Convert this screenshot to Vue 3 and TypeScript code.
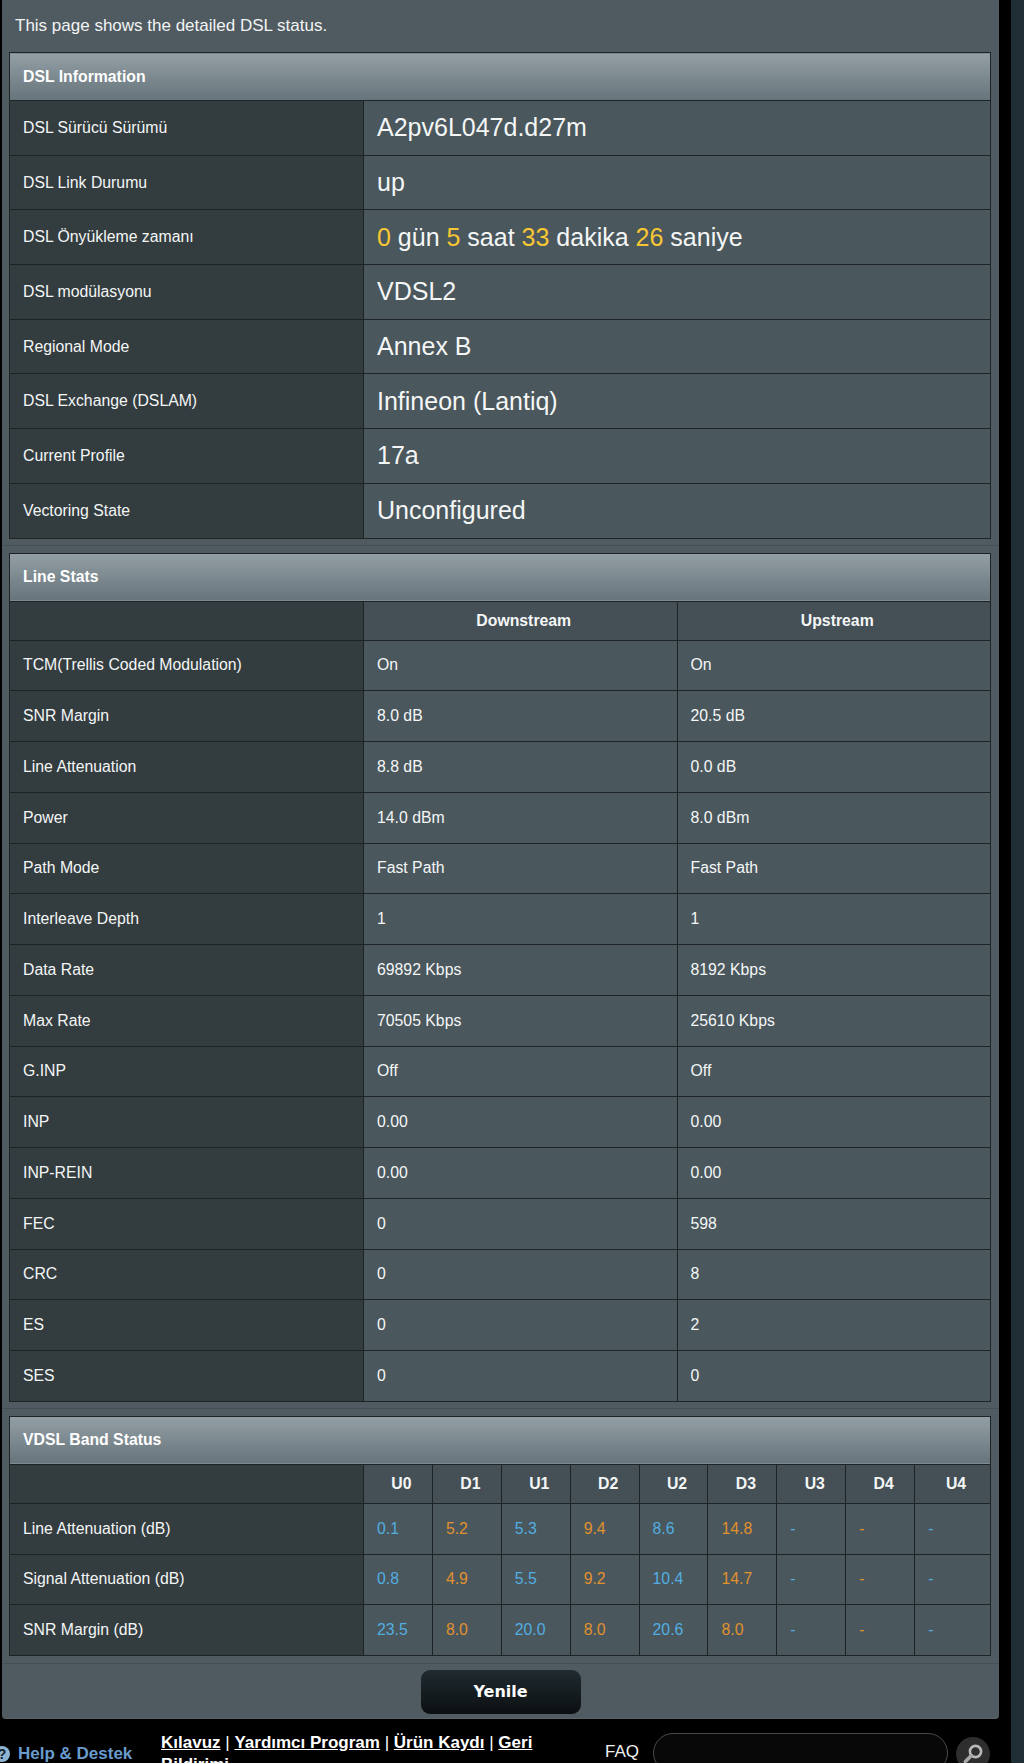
<script setup lang="ts">
interface Span { t: string; hi?: boolean }
const info: { label: string; value: Span[] }[] = [
  { label: 'DSL Sürücü Sürümü', value: [{ t: 'A2pv6L047d.d27m' }] },
  { label: 'DSL Link Durumu', value: [{ t: 'up' }] },
  { label: 'DSL Önyükleme zamanı', value: [
    { t: '0', hi: true }, { t: ' gün ' }, { t: '5', hi: true }, { t: ' saat ' },
    { t: '33', hi: true }, { t: ' dakika ' }, { t: '26', hi: true }, { t: ' saniye' },
  ] },
  { label: 'DSL modülasyonu', value: [{ t: 'VDSL2' }] },
  { label: 'Regional Mode', value: [{ t: 'Annex B' }] },
  { label: 'DSL Exchange (DSLAM)', value: [{ t: 'Infineon (Lantiq)' }] },
  { label: 'Current Profile', value: [{ t: '17a' }] },
  { label: 'Vectoring State', value: [{ t: 'Unconfigured' }] },
]
const stats: [string, string, string][] = [
  ['TCM(Trellis Coded Modulation)', 'On', 'On'],
  ['SNR Margin', '8.0 dB', '20.5 dB'],
  ['Line Attenuation', '8.8 dB', '0.0 dB'],
  ['Power', '14.0 dBm', '8.0 dBm'],
  ['Path Mode', 'Fast Path', 'Fast Path'],
  ['Interleave Depth', '1', '1'],
  ['Data Rate', '69892 Kbps', '8192 Kbps'],
  ['Max Rate', '70505 Kbps', '25610 Kbps'],
  ['G.INP', 'Off', 'Off'],
  ['INP', '0.00', '0.00'],
  ['INP-REIN', '0.00', '0.00'],
  ['FEC', '0', '598'],
  ['CRC', '0', '8'],
  ['ES', '0', '2'],
  ['SES', '0', '0'],
]
const bands = ['U0', 'D1', 'U1', 'D2', 'U2', 'D3', 'U3', 'D4', 'U4']
const bandRows: { label: string; values: string[] }[] = [
  { label: 'Line Attenuation (dB)', values: ['0.1', '5.2', '5.3', '9.4', '8.6', '14.8', '-', '-', '-'] },
  { label: 'Signal Attenuation (dB)', values: ['0.8', '4.9', '5.5', '9.2', '10.4', '14.7', '-', '-', '-'] },
  { label: 'SNR Margin (dB)', values: ['23.5', '8.0', '20.0', '8.0', '20.6', '8.0', '-', '-', '-'] },
]
const links = ['Kılavuz', 'Yardımcı Program', 'Ürün Kaydı']
</script>

<template>
  <div class="page">
    <div class="main">
      <div class="panel">
        <p class="intro">This page shows the detailed DSL status.</p>

        <section class="section">
          <table class="info">
            <colgroup><col class="c-label" /><col /></colgroup>
            <thead><tr><td colspan="2" class="title">DSL Information</td></tr></thead>
            <tbody>
              <tr v-for="r in info" :key="r.label">
                <th>{{ r.label }}</th>
                <td class="big"><span v-for="(s, i) in r.value" :key="i" :class="{ hi: s.hi }">{{ s.t }}</span></td>
              </tr>
            </tbody>
          </table>
        </section>

        <section class="section">
          <table class="stats">
            <colgroup><col class="c-label" /><col /><col /></colgroup>
            <thead>
              <tr><td colspan="3" class="title">Line Stats</td></tr>
              <tr class="head"><th></th><td>Downstream</td><td>Upstream</td></tr>
            </thead>
            <tbody>
              <tr v-for="r in stats" :key="r[0]">
                <th>{{ r[0] }}</th><td>{{ r[1] }}</td><td>{{ r[2] }}</td>
              </tr>
            </tbody>
          </table>
        </section>

        <section class="section">
          <table class="bands">
            <colgroup>
              <col class="c-label" />
              <col v-for="(b, i) in bands" :key="b" :class="i === 8 ? 'c-last' : 'c-band'" />
            </colgroup>
            <thead>
              <tr><td colspan="10" class="title">VDSL Band Status</td></tr>
              <tr class="head"><th></th><td v-for="b in bands" :key="b">{{ b }}</td></tr>
            </thead>
            <tbody>
              <tr v-for="r in bandRows" :key="r.label">
                <th>{{ r.label }}</th>
                <td v-for="(v, i) in r.values" :key="i" :class="i % 2 === 0 ? 'up' : 'down'">{{ v }}</td>
              </tr>
            </tbody>
          </table>
        </section>

        <div class="actions"><button class="refresh" type="button">Yenile</button></div>
      </div>

      <footer class="footer">
        <div class="help">
          <span class="help-icon">?</span>
          <span class="help-text">Help &amp; Destek</span>
        </div>
        <div class="links">
          <template v-for="l in links" :key="l"><a>{{ l }}</a>{{ ' | ' }}</template><a>Geri</a>{{ ' ' }}<a>Bildirimi</a>
        </div>
        <span class="faq">FAQ</span>
        <div class="search-field"></div>
        <div class="search-btn">
          <svg width="24" height="24" viewBox="0 0 24 24" fill="none">
            <circle cx="14.5" cy="9.5" r="5.6" stroke="#b9b9b9" stroke-width="2.6" />
            <path d="M10.4 13.6 4.4 19.6" stroke="#a8a8a8" stroke-width="3.6" stroke-linecap="round" />
          </svg>
        </div>
      </footer>
    </div>
    <div class="strip"></div>
  </div>
</template>

<style>
html, body { margin: 0; background: #000; }
</style>

<style scoped>
.page {
  display: flex;
  width: 1024px;
  height: 1763px;
  overflow: hidden;
  background: #000;
  font-family: "Liberation Sans", Arial, sans-serif;
  color: #fff;
}
.main { width: 1011px; padding-left: 2px; box-sizing: border-box; }
.strip { width: 13px; background: #1f2d35; }

.panel {
  width: 997px;
  height: 1719px;
  box-sizing: border-box;
  padding: 0 8px 0 7px;
  background: #4f5a61;
  border-radius: 0 0 4px 4px;
  border-bottom: 1px solid #5b666c;
}
.intro {
  margin: 0;
  height: 52px;
  padding: 16px 0 0 6px;
  box-sizing: border-box;
  font-size: 17px;
  line-height: 20px;
  color: #f2f4f4;
}
.section {
  margin: 0 -8px 0 -7px;
  padding: 0 8px 6.5px 7px;
  border-bottom: 1px solid #445056;
}
.section + .section { padding-top: 6.5px; }

table {
  width: 982px;
  border-collapse: collapse;
  table-layout: fixed;
  font-size: 15.8px;
}
.c-label { width: 354px; }
.c-band { width: 68.9px; }
td, th {
  border: 1px solid #1e2325;
  padding: 0 13px;
  box-sizing: border-box;
  font-weight: 400;
  text-align: left;
  color: #f4f6f6;
}
th { background: #333c3f; }
td { background: #4a575d; }

.title {
  height: 48px;
  font-weight: 700;
  background: linear-gradient(180deg, #939fa5 0%, #66747b 100%);
  color: #fff;
}
.head td {
  height: 39px;
  background: #445056;
  font-weight: 700;
  text-align: center;
  padding: 0 0 0 7px;
}
.head th { height: 39px; }

.info tbody tr > * { height: 54.7px; }
.stats tbody tr > * { height: 50.75px; }
.bands tbody tr > * { height: 50.8px; }

.big { font-size: 25px; }
.hi { color: #f7c733; }
.up { color: #52aee0; }
.down { color: #e1912e; }

.actions { display: flex; justify-content: center; padding-top: 6px; }
.refresh {
  width: 160px;
  height: 44px;
  margin-left: 1px;
  border: 0;
  border-radius: 9px;
  background: linear-gradient(180deg, #1f2b30 0%, #0c0f11 100%);
  color: #fff;
  font-family: "DejaVu Sans", Verdana, sans-serif;
  font-size: 16px;
  font-weight: 700;
}

.footer {
  display: flex;
  align-items: flex-start;
  height: 44px;
  background: #000;
}
.help {
  display: flex;
  align-items: center;
  width: 167px;
  margin: 25px 0 0 -8px;
  flex: none;
}
.help-icon {
  width: 16px;
  height: 16px;
  margin-right: 8px;
  border-radius: 50%;
  background: #8fb4d2;
  color: #10202c;
  font-size: 14px;
  line-height: 16px;
  font-weight: 700;
  text-align: center;
}
.help-text { color: #699ccc; font-size: 17px; font-weight: 700; }
.links {
  width: 390px;
  margin: 13px 54px 0 0;
  flex: none;
  font-size: 17px;
  line-height: 22px;
  font-weight: 400;
}
.links a { font-weight: 700; text-decoration: underline; }
.faq { margin: 23px 0 0 0; font-size: 17px; color: #f0f0f0; flex: none; }
.search-field {
  flex: none;
  width: 295px;
  height: 40px;
  margin: 14px 0 0 14px;
  box-sizing: border-box;
  border: 1px solid #4a4a4a;
  border-radius: 20px;
  background: #080808;
}
.search-btn {
  flex: none;
  display: flex;
  align-items: center;
  justify-content: center;
  width: 34px;
  height: 34px;
  margin: 18px 0 0 8px;
  border-radius: 50%;
  background: #2e2e2e;
}
</style>
